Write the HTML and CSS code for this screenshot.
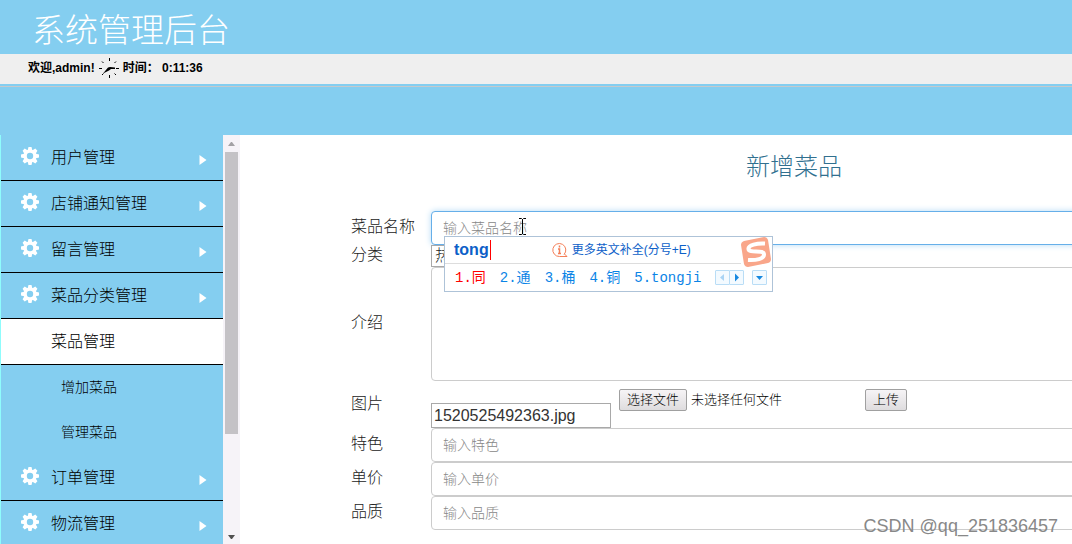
FILE: index.html
```html
<!DOCTYPE html>
<html lang="zh-CN">
<head>
<meta charset="utf-8">
<title>系统管理后台</title>
<link rel="stylesheet" href="styles.css">
</head>
<body>
<svg class="symbols" aria-hidden="true">
  <symbol id="gear" viewBox="0 0 18 18">
    <g fill="#fff"><path d="M7.500 0h3L11.500 4h-5ZM7.500 18h3L11.500 14h-5Z"/><path d="M7.500 0h3L11.500 4h-5ZM7.500 18h3L11.500 14h-5Z" transform="rotate(45 9 9)"/><path d="M7.500 0h3L11.500 4h-5ZM7.500 18h3L11.500 14h-5Z" transform="rotate(90 9 9)"/><path d="M7.500 0h3L11.500 4h-5ZM7.500 18h3L11.500 14h-5Z" transform="rotate(135 9 9)"/><circle cx="9" cy="9" r="6.500"/></g>
    <circle cx="9" cy="9" r="3.200" fill="#84cef0"/>
  </symbol>
  <symbol id="arrow" viewBox="0 0 8 10"><path d="M0.500 0L7.500 5L0.500 10Z" fill="#fff"/></symbol>
</svg>
<header class="banner"><h1 class="site-title">系统管理后台</h1></header>
<div class="status">
  <span>欢迎,admin!</span>
  <svg class="clock" viewBox="0 0 20 20"><path d="M10.500 0v3M10.500 17v3M0 10.500h3M17 10.500h3M3 3.500l1.500 1.500M17 3.500l-1.500 1.500M3 17l1.500-1.500M17 17l-1.500-1.500" stroke="#000"/><path d="M4 15.500L9 9.500L11 9L16 9.500V11H12L10 12.500Z"/></svg>
  <span>时间： 0:11:36</span>
</div>
<div class="strip"></div>
<div class="page">
  <nav class="sidebar">
    <a class="item" href="#"><svg class="gear"><use href="#gear"/></svg><span>用户管理</span><svg class="arrow"><use href="#arrow"/></svg></a>
    <a class="item" href="#"><svg class="gear"><use href="#gear"/></svg><span>店铺通知管理</span><svg class="arrow"><use href="#arrow"/></svg></a>
    <a class="item" href="#"><svg class="gear"><use href="#gear"/></svg><span>留言管理</span><svg class="arrow"><use href="#arrow"/></svg></a>
    <a class="item" href="#"><svg class="gear"><use href="#gear"/></svg><span>菜品分类管理</span><svg class="arrow"><use href="#arrow"/></svg></a>
    <a class="item current" href="#"><span>菜品管理</span></a>
    <a class="subitem" href="#">增加菜品</a>
    <a class="subitem" href="#">管理菜品</a>
    <a class="item" href="#"><svg class="gear"><use href="#gear"/></svg><span>订单管理</span><svg class="arrow"><use href="#arrow"/></svg></a>
    <a class="item" href="#"><svg class="gear"><use href="#gear"/></svg><span>物流管理</span><svg class="arrow"><use href="#arrow"/></svg></a>
  </nav>
  <div class="scrollbar" aria-hidden="true">
    <svg class="scroll-arrow" viewBox="0 0 17 17"><path d="M5 11L8 7H9L12 11Z" fill="#a3a1a5"/></svg>
    <div class="thumb"></div>
    <svg class="scroll-arrow" viewBox="0 0 17 17"><path d="M5 8H12L9 12H8Z" fill="#505050"/></svg>
  </div>
  <main class="content">
    <h2 class="form-title">新增菜品</h2>
    <form class="form">
      <label class="label" for="name">菜品名称</label>
      <input class="field focused" id="name" type="text" placeholder="输入菜品名称">
      <label class="label" for="kind">分类</label>
      <select class="kind" id="kind"><option>热菜</option></select>
      <label class="label" for="intro">介绍</label>
      <textarea class="intro" id="intro"></textarea>
      <label class="label" for="image">图片</label>
      <div class="upload">
        <input class="filename" id="image" type="text" value="1520525492363.jpg">
        <div class="picker">
          <input class="file" id="file" type="file">
          <label class="button" for="file">选择文件</label>
          <span>未选择任何文件</span>
        </div>
        <button class="button" type="button">上传</button>
      </div>
      <label class="label" for="feature">特色</label>
      <input class="field" id="feature" type="text" placeholder="输入特色">
      <label class="label" for="price">单价</label>
      <input class="field" id="price" type="text" placeholder="输入单价">
      <label class="label" for="quality">品质</label>
      <input class="field" id="quality" type="text" placeholder="输入品质">
    </form>
  </main>
</div>
<div class="ime">
  <div class="ime-top">
    <span class="typed">tong</span>
    <svg class="info" viewBox="0 0 16 16" fill="none" stroke="#f47f58"><path d="M12 12.500A6.500 6.500 0 1 0 7.500 14.500H15L12.500 12"/><path d="M7.500 3.500v2M6 7h1.500V11.500M6 11.500h3" stroke-width="1.500"/></svg>
    <span class="hint">更多英文补全(分号+E)</span>
  </div>
  <div class="candidates">
    <span class="first">1.同</span><span>2.通</span><span>3.桶</span><span>4.铜</span><span>5.tongji</span>
    <div class="controls">
      <div class="pager">
        <button class="mini" type="button" aria-label="上一页"><svg viewBox="0 0 13 13"><path d="M8 3v7L4 6.500Z" fill="#a9d4f5"/></svg></button>
        <button class="mini" type="button" aria-label="下一页"><svg viewBox="0 0 13 13"><path d="M5 2.500v8L9 6.500Z" fill="#1688e0"/></svg></button>
      </div>
      <button class="mini" type="button" aria-label="展开"><svg viewBox="0 0 13 13"><path d="M3 5h7L6.500 9Z" fill="#1688e0"/></svg></button>
    </div>
  </div>
  <svg class="sogou" viewBox="0 0 32 30"><path d="M4 4L24 0Q27 0 28 3L31 22Q31 25 28 26L8 30Q5 30 4 27L1 8Q1 5 4 4Z" fill="#f9a68a"/><path d="M25 6.500C17 6 8 8 8.500 12C9 17 24 12 24 17.500C24 22 16 23.500 8 23" fill="none" stroke="#fff" stroke-width="4"/></svg>
</div>
<svg class="caret" viewBox="0 0 7 17" aria-hidden="true"><path d="M0 .5H2.500L3.500 1.500L4.500 .5H7M3.500 1V16M0 16.500H2.500L3.500 15.500L4.500 16.500H7" fill="none" stroke="#000"/></svg>
<div class="watermark">CSDN @qq_251836457</div>
</body>
</html>
```

FILE: styles.css
```css
* { box-sizing: border-box; }

body {
  margin: 0;
  height: 100vh;
  display: flex;
  flex-direction: column;
  overflow: hidden;
  position: relative;
  background: #fff;
  color: #000;
  font-family: "Liberation Sans", "Noto Sans CJK SC", sans-serif;
  font-size: 16px;
  font-weight: 300;
}

input, select, textarea, button { font: inherit; }
.symbols { position: absolute; width: 0; height: 0; }

.banner { flex: none; background: #84cef0; padding: 8px 32px 0; height: 54px; }
.site-title { margin: 0; color: #fff; font-size: 33px; line-height: 46px; font-weight: 300; }

.status {
  flex: none;
  display: flex;
  align-items: center;
  gap: 4px;
  height: 30px;
  padding: 0 28px 2px;
  background: #efefef;
  font-size: 12px;
  font-weight: bold;
  line-height: 16px;
}
.clock { width: 20px; height: 20px; }

.strip { flex: none; height: 51px; background: #84cef0; padding-top: 2px; }
.strip::before { content: ""; display: block; height: 1px; background: #c6c9cc; }

.page { flex: 1; min-height: 0; display: flex; }

.sidebar { flex: none; width: 223px; border-left: 1px solid #8ffcfc; background: #84cef0; overflow: hidden; }
.item {
  display: flex;
  align-items: center;
  gap: 12px;
  height: 46px;
  padding: 0 16px 0 20px;
  border-bottom: 1px solid #000;
  color: #000;
  line-height: 24px;
  text-decoration: none;
}
.current { background: #fff; padding-left: 50px; }
.gear { width: 18px; height: 18px; margin-bottom: 4px; }
.arrow { width: 8px; height: 10px; margin: 4px 0 0 auto; }
.subitem {
  display: block;
  height: 45px;
  padding-left: 60px;
  color: #000;
  font-size: 14px;
  line-height: 45px;
  text-decoration: none;
}

.scrollbar { flex: none; width: 17px; display: flex; flex-direction: column; align-items: center; background: #f6f3f8; }
.scroll-arrow { flex: none; width: 17px; height: 17px; }
.thumb { width: 13px; height: 69%; margin-bottom: auto; background: #c4c2c6; }

.content { flex: 1; min-width: 0; overflow: hidden; color: #333; }
.form-title {
  margin: 0;
  padding: 14px 0 26px 276px;
  color: #31708f;
  font-size: 24px;
  font-weight: 300;
  line-height: 36px;
  text-align: center;
}
.form {
  display: grid;
  grid-template-columns: 80px 1fr;
  align-items: center;
  margin-right: -12px;
  padding-left: 111px;
}
.label { line-height: 20px; padding-bottom: 2px; color: #222; }
.field, .intro {
  width: 100%;
  border: 1px solid #ccc;
  border-radius: 4px;
  background: #fff;
  color: #555;
  font-size: 14px;
}
.field { height: 34px; padding: 0 11px; }
.field::placeholder { color: #888; opacity: 1; }
.focused { border-color: #66afe9; box-shadow: 0 0 6px #b5daf5; }
.intro { display: block; height: 114px; resize: none; }
.kind {
  width: 60px;
  height: 22px;
  padding: 0 3px;
  border: 1px solid #a9a9a9;
  background: #fff;
  color: #222;
  line-height: 20px;
  appearance: none;
}

.upload { display: flex; align-items: flex-start; height: 47px; padding-top: 8px; font-size: 13px; color: #000; }
.filename {
  align-self: flex-end;
  width: 180px;
  height: 25px;
  margin-right: 8px;
  padding: 0 2px;
  border: 1px solid #a9a9a9;
  background: #fff;
  color: #333;
  font-size: 16px;
}
.picker { display: flex; align-items: center; gap: 4px; width: 246px; line-height: 20px; }
.file { position: absolute; width: 1px; height: 1px; opacity: 0; }
.button {
  height: 22px;
  padding: 0 7px;
  border: 1px solid #a0a0a0;
  border-radius: 2px;
  background: linear-gradient(#f6f4f6, #dedcde);
  color: #000;
  line-height: 20px;
}

.ime {
  position: absolute;
  left: 444px;
  top: 236px;
  width: 329px;
  height: 56px;
  border: 1px solid #aec3d8;
  background: #fff;
  color: #0b84e6;
}
.ime-top { display: flex; align-items: center; height: 27px; margin-right: 31px; padding-left: 9px; border-bottom: 1px solid #ddd; }
.typed { padding-right: 1px; border-right: 1px solid #f00; color: #0c60c8; font-size: 16px; font-weight: bold; line-height: 20px; }
.info { width: 16px; height: 16px; margin: 0 4px 0 61px; }
.hint { color: #0c60c8; font-size: 12px; font-weight: 400; line-height: 16px; }
.candidates {
  display: flex;
  align-items: center;
  gap: 14px;
  height: 27px;
  padding: 0 8px 0 10px;
  font-family: "Liberation Mono", "Noto Sans CJK SC", monospace;
  font-size: 14px;
  font-weight: 400;
  line-height: 20px;
  white-space: nowrap;
}
.first { color: #f00; }
.controls { display: flex; gap: 8px; margin-left: auto; }
.pager { display: flex; }
.mini { width: 15px; height: 15px; padding: 0; border: 1px solid #b9ddf6; background: #f3faff; border-radius: 1px; }
.mini svg { display: block; width: 13px; height: 13px; }
.mini + .mini { margin-left: -1px; }
.sogou { position: absolute; right: 0; top: 0; width: 32px; height: 30px; }

.caret { position: absolute; left: 519px; top: 218px; width: 7px; height: 17px; }
.watermark { position: absolute; right: 14px; bottom: 7px; color: #888; font-size: 18px; line-height: 22px; }
```
